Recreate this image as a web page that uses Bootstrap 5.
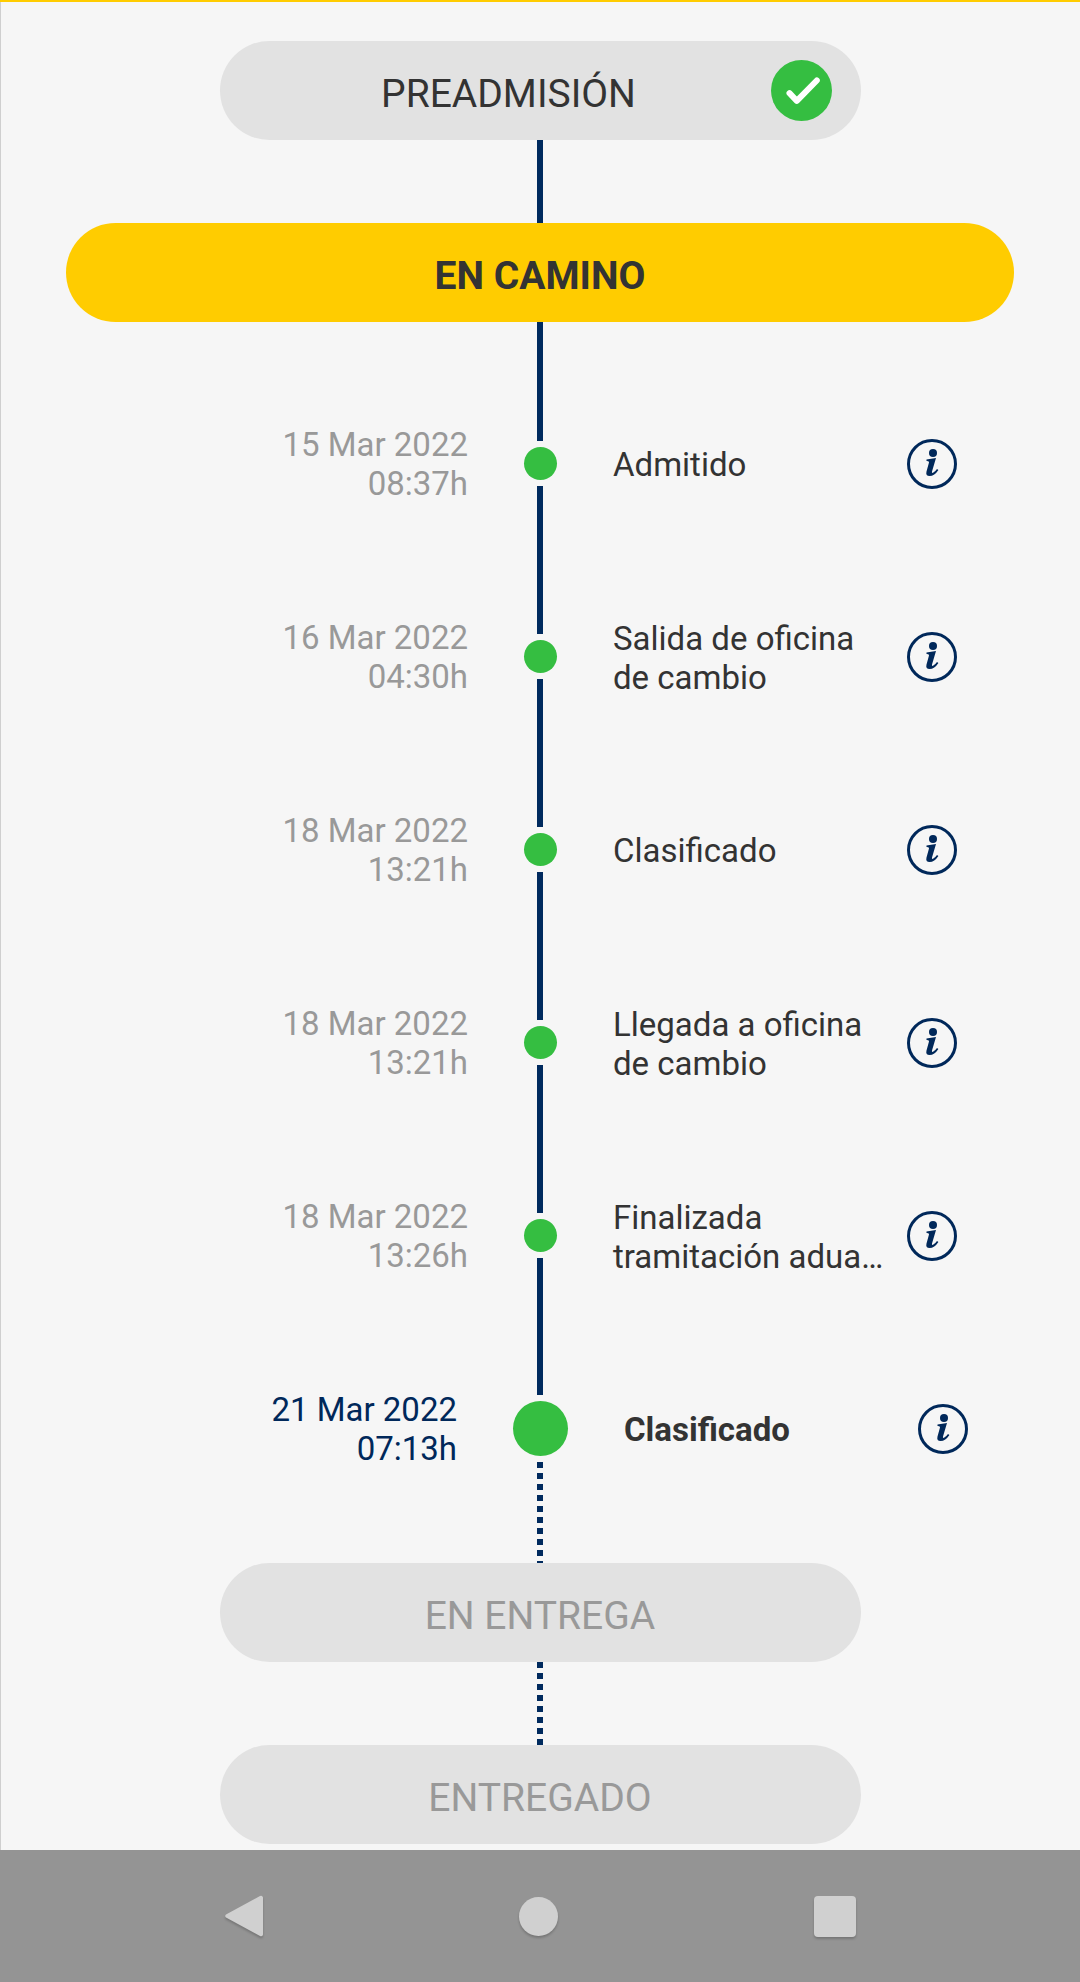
<!DOCTYPE html>
<html lang="es">
<head>
    <meta charset="UTF-8">
    <meta name="viewport" content="width=device-width, initial-scale=1.0">
    <title>Seguimiento</title>
    <link rel="stylesheet" href="https://cdn.jsdelivr.net/npm/bootstrap@5.3.0/dist/css/bootstrap.min.css">
    <style>
        html, body { height: 100%; }
        body { background: #f6f6f6; font-family: Roboto, "Liberation Sans", sans-serif; color: #333; }
        .screen { width: 1080px; height: 1982px; }
        .track { height: 1850px; padding-top: 39px; border-top: 2px solid #ffcc00; box-shadow: inset 1px 0 0 #cfcfcf; }

        /* big pills */
        .stage { width: 641px; height: 99px; padding-top: 7px; background: #e2e2e2; font-size: 39px; flex: none; }
        .stage-active { width: 948px; background: #ffcc00; font-weight: 700; }
        .stage-off { color: #999; }
        .stage-text { flex: 1; text-align: center; }
        .stage-check { width: 61px; height: 61px; margin: -7px 29px 0 -27px; flex: none; }

        /* timeline line */
        .link { width: 6px; background: #002a5e; flex: none; }
        .link-83 { height: 83px; }
        .link-45 { height: 45px; }
        .link-38 { height: 38px; }
        .dashed { background: linear-gradient(#002a5e 6px, transparent 6px) 0 0 / 6px 11px repeat-y; }
        .link-38.dashed { background-position: 0 -8px; }

        /* rows */
        .step { height: 193px; flex: none; }
        .step-date { width: 345px; color: #999; font-size: 33px; line-height: 39px; text-align: right; align-self: center; }
        .step-rail { width: 33px; margin: 0 56px; }
        .step-line { width: 6px; flex: 1; margin-left: 13px; background-color: #002a5e; }
        .step-dot { width: 33px; height: 33px; margin: 6px 0; background: #35be41; flex: none; }
        .step-body { width: 344px; align-self: center; }
        .step-label { flex: 1; padding-top: 2px; font-size: 33px; line-height: 39px; white-space: nowrap; }
        .step-info { width: 50px; height: 50px; flex: none; display: block; }
        .step-now .step-date { color: #00285a; }
        .step-now .step-rail { width: 55px; }
        .step-now .step-line { margin-left: 24px; }
        .step-now .step-line.dashed { background-color: transparent; }
        .step-now .step-dot { width: 55px; height: 55px; }
        .step-now .step-label { font-weight: 700; }

        /* android buttons */
        .sysbar { height: 132px; background: #949494; padding-left: 225px; gap: 256px; }
        .sys-btn { display: block; flex: none; filter: drop-shadow(0 2px 1px rgba(0,0,0,.2)); }
    </style>
</head>
<body class="m-0">
<div class="screen d-flex flex-column">
    <div class="track d-flex flex-column align-items-center">

        <div class="stage rounded-pill d-flex align-items-center">
            <span class="stage-text">PREADMISIÓN</span>
            <svg class="stage-check" viewBox="0 0 61 61">
                <circle cx="30.5" cy="30.5" r="30.5" fill="#35be41"/>
                <path d="M18.5 33.2 25.8 40.8 45.8 20.5" fill="none" stroke="#fff" stroke-width="6" stroke-linecap="round" stroke-linejoin="round"/>
            </svg>
        </div>
        <div class="link link-83"></div>
        <div class="stage stage-active rounded-pill d-flex align-items-center justify-content-center">EN CAMINO</div>
        <div class="link link-45"></div>

        <div class="step d-flex justify-content-center">
            <div class="step-date">15 Mar 2022<br>08:37h</div>
            <div class="step-rail d-flex flex-column">
                <div class="step-line"></div><div class="step-dot rounded-circle"></div><div class="step-line"></div>
            </div>
            <div class="step-body d-flex align-items-center">
                <div class="step-label">Admitido</div>
                <svg class="step-info" viewBox="0 0 50 50"><use href="#info"/></svg>
            </div>
        </div>

        <div class="step d-flex justify-content-center">
            <div class="step-date">16 Mar 2022<br>04:30h</div>
            <div class="step-rail d-flex flex-column">
                <div class="step-line"></div><div class="step-dot rounded-circle"></div><div class="step-line"></div>
            </div>
            <div class="step-body d-flex align-items-center">
                <div class="step-label">Salida de oficina<br>de cambio</div>
                <svg class="step-info" viewBox="0 0 50 50"><use href="#info"/></svg>
            </div>
        </div>

        <div class="step d-flex justify-content-center">
            <div class="step-date">18 Mar 2022<br>13:21h</div>
            <div class="step-rail d-flex flex-column">
                <div class="step-line"></div><div class="step-dot rounded-circle"></div><div class="step-line"></div>
            </div>
            <div class="step-body d-flex align-items-center">
                <div class="step-label">Clasificado</div>
                <svg class="step-info" viewBox="0 0 50 50"><use href="#info"/></svg>
            </div>
        </div>

        <div class="step d-flex justify-content-center">
            <div class="step-date">18 Mar 2022<br>13:21h</div>
            <div class="step-rail d-flex flex-column">
                <div class="step-line"></div><div class="step-dot rounded-circle"></div><div class="step-line"></div>
            </div>
            <div class="step-body d-flex align-items-center">
                <div class="step-label">Llegada a oficina<br>de cambio</div>
                <svg class="step-info" viewBox="0 0 50 50"><use href="#info"/></svg>
            </div>
        </div>

        <div class="step d-flex justify-content-center">
            <div class="step-date">18 Mar 2022<br>13:26h</div>
            <div class="step-rail d-flex flex-column">
                <div class="step-line"></div><div class="step-dot rounded-circle"></div><div class="step-line"></div>
            </div>
            <div class="step-body d-flex align-items-center">
                <div class="step-label">Finalizada<br>tramitación adua…</div>
                <svg class="step-info" viewBox="0 0 50 50"><use href="#info"/></svg>
            </div>
        </div>

        <div class="step step-now d-flex justify-content-center">
            <div class="step-date">21 Mar 2022<br>07:13h</div>
            <div class="step-rail d-flex flex-column">
                <div class="step-line"></div><div class="step-dot rounded-circle"></div><div class="step-line dashed"></div>
            </div>
            <div class="step-body d-flex align-items-center">
                <div class="step-label">Clasificado</div>
                <svg class="step-info" viewBox="0 0 50 50"><use href="#info"/></svg>
            </div>
        </div>

        <div class="link link-38 dashed"></div>
        <div class="stage stage-off rounded-pill d-flex align-items-center justify-content-center">EN ENTREGA</div>
        <div class="link link-83 dashed"></div>
        <div class="stage stage-off rounded-pill d-flex align-items-center justify-content-center">ENTREGADO</div>
    </div>

    <div class="sysbar d-flex align-items-center">
        <svg class="sys-btn" width="38" height="44" viewBox="0 0 38 44"><path d="M35 2 1 20.5a1.8 1.8 0 0 0 0 3L35 42a2 2 0 0 0 3-1.5V3.5a2 2 0 0 0-3-1.5Z" fill="#d0d0d0"/></svg>
        <svg class="sys-btn" width="39" height="39" viewBox="0 0 39 39"><circle cx="19.5" cy="19.5" r="19.5" fill="#d0d0d0"/></svg>
        <svg class="sys-btn" width="42" height="41" viewBox="0 0 42 41"><rect width="42" height="41" rx="4" fill="#d0d0d0"/></svg>
    </div>
</div>

<svg width="0" height="0" class="d-block">
    <defs>
        <g id="info">
            <circle cx="25" cy="25" r="23.5" fill="none" stroke="#00285a" stroke-width="3"/>
            <circle cx="26" cy="14" r="4" fill="#00285a"/>
            <path d="M19.5 20.5 29 19 25 32.5Q24.6 34.4 26 33.8 28 32.8 30 30L31.4 31Q27.5 37 22.6 37 18.4 37 19.5 32.5L22 23.6Q22.5 21.8 19.5 22Z" fill="#00285a"/>
        </g>
    </defs>
</svg>
<script src="https://cdn.jsdelivr.net/npm/bootstrap@5.3.0/dist/js/bootstrap.bundle.min.js"></script>
</body>
</html>
